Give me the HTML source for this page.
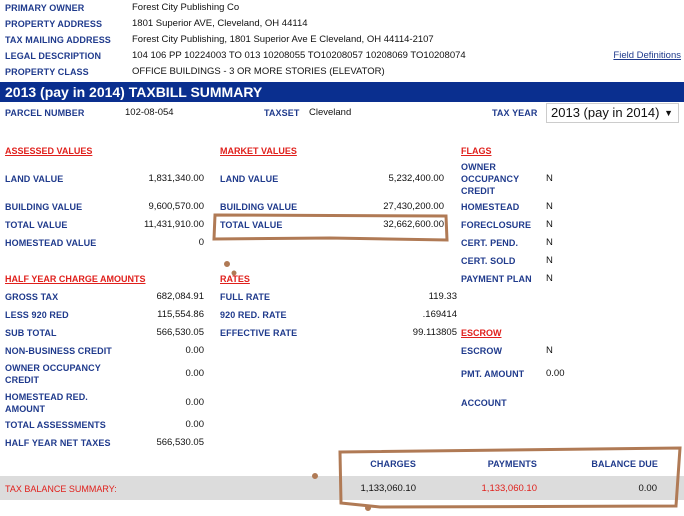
<!DOCTYPE html>
<html><head><style>
body{margin:0;width:684px;height:516px;position:relative;background:#fff;font-family:"Liberation Sans",Arial,sans-serif;overflow:hidden}
div{position:absolute;white-space:nowrap;line-height:12px}
.l{font-size:9px;font-weight:bold;color:#1f3a8c;letter-spacing:0.1px}
.t{font-size:9.5px;color:#111}
.v{font-size:9.5px;color:#111;text-align:right;width:150px}
.h{font-size:9px;font-weight:bold;color:#e0201c;text-decoration:underline}
</style></head><body>
<div class="l" style="left:5px;top:2px">PRIMARY OWNER</div>
<div class="t" style="left:132px;top:2px">Forest City Publishing Co</div>
<div class="l" style="left:5px;top:18px">PROPERTY ADDRESS</div>
<div class="t" style="left:132px;top:18px">1801 Superior AVE, Cleveland, OH 44114</div>
<div class="l" style="left:5px;top:34px">TAX MAILING ADDRESS</div>
<div class="t" style="left:132px;top:34px">Forest City Publishing, 1801 Superior Ave E Cleveland, OH 44114-2107</div>
<div class="l" style="left:5px;top:50px">LEGAL DESCRIPTION</div>
<div class="t" style="left:132px;top:50px">104 106 PP 10224003 TO 013 10208055 TO10208057 10208069 TO10208074</div>
<div class="t" style="right:3px;top:50px;color:#1f3a8c;text-decoration:underline">Field Definitions</div>
<div class="l" style="left:5px;top:66px">PROPERTY CLASS</div>
<div class="t" style="left:132px;top:66px">OFFICE BUILDINGS - 3 OR MORE STORIES (ELEVATOR)</div>
<div style="left:0;top:82px;width:684px;height:20px;background:#0a2f8f"></div>
<div style="left:5px;top:83px;line-height:18px;color:#fff;font-weight:bold;font-size:14px">2013 (pay in 2014) TAXBILL SUMMARY</div>
<div class="l" style="left:5px;top:107px">PARCEL NUMBER</div>
<div class="t" style="left:125px;top:107px">102-08-054</div>
<div class="l" style="left:264px;top:107px">TAXSET</div>
<div class="t" style="left:309px;top:107px">Cleveland</div>
<div class="l" style="left:492px;top:107px">TAX YEAR</div>
<div style="left:546px;top:103px;width:133px;height:20px;border:1px solid #ccc;box-sizing:border-box;font-size:13px;line-height:18px;padding-left:4px;color:#111">2013 (pay in 2014)<span style="position:absolute;right:5px;font-size:9px">▼</span></div>

<div class="h" style="left:5px;top:145px">ASSESSED VALUES</div>
<div class="h" style="left:220px;top:145px">MARKET VALUES</div>
<div class="h" style="left:461px;top:145px">FLAGS</div>

<div class="l" style="left:5px;top:173px">LAND VALUE</div><div class="v" style="left:54px;top:173px">1,831,340.00</div>
<div class="l" style="left:5px;top:201px">BUILDING VALUE</div><div class="v" style="left:54px;top:201px">9,600,570.00</div>
<div class="l" style="left:5px;top:219px">TOTAL VALUE</div><div class="v" style="left:54px;top:219px">11,431,910.00</div>
<div class="l" style="left:5px;top:237px">HOMESTEAD VALUE</div><div class="v" style="left:54px;top:237px">0</div>

<div class="l" style="left:220px;top:173px">LAND VALUE</div><div class="v" style="left:294px;top:173px">5,232,400.00</div>
<div class="l" style="left:220px;top:201px">BUILDING VALUE</div><div class="v" style="left:294px;top:201px">27,430,200.00</div>
<div class="l" style="left:220px;top:219px">TOTAL VALUE</div><div class="v" style="left:294px;top:219px">32,662,600.00</div>

<div class="l" style="left:461px;top:161px">OWNER</div>
<div class="l" style="left:461px;top:173px">OCCUPANCY</div>
<div class="l" style="left:461px;top:185px">CREDIT</div>
<div class="t" style="left:546px;top:173px">N</div>
<div class="l" style="left:461px;top:201px">HOMESTEAD</div><div class="t" style="left:546px;top:201px">N</div>
<div class="l" style="left:461px;top:219px">FORECLOSURE</div><div class="t" style="left:546px;top:219px">N</div>
<div class="l" style="left:461px;top:237px">CERT. PEND.</div><div class="t" style="left:546px;top:237px">N</div>
<div class="l" style="left:461px;top:255px">CERT. SOLD</div><div class="t" style="left:546px;top:255px">N</div>
<div class="l" style="left:461px;top:273px">PAYMENT PLAN</div><div class="t" style="left:546px;top:273px">N</div>

<div class="h" style="left:5px;top:273px">HALF YEAR CHARGE AMOUNTS</div>
<div class="h" style="left:220px;top:273px">RATES</div>

<div class="l" style="left:5px;top:291px">GROSS TAX</div><div class="v" style="left:54px;top:291px">682,084.91</div>
<div class="l" style="left:5px;top:309px">LESS 920 RED</div><div class="v" style="left:54px;top:309px">115,554.86</div>
<div class="l" style="left:5px;top:327px">SUB TOTAL</div><div class="v" style="left:54px;top:327px">566,530.05</div>
<div class="l" style="left:5px;top:345px">NON-BUSINESS CREDIT</div><div class="v" style="left:54px;top:345px">0.00</div>
<div class="l" style="left:5px;top:362px">OWNER OCCUPANCY</div>
<div class="l" style="left:5px;top:374px">CREDIT</div><div class="v" style="left:54px;top:368px">0.00</div>
<div class="l" style="left:5px;top:391px">HOMESTEAD RED.</div>
<div class="l" style="left:5px;top:403px">AMOUNT</div><div class="v" style="left:54px;top:397px">0.00</div>
<div class="l" style="left:5px;top:419px">TOTAL ASSESSMENTS</div><div class="v" style="left:54px;top:419px">0.00</div>
<div class="l" style="left:5px;top:437px">HALF YEAR NET TAXES</div><div class="v" style="left:54px;top:437px">566,530.05</div>

<div class="l" style="left:220px;top:291px">FULL RATE</div><div class="v" style="left:307px;top:291px">119.33</div>
<div class="l" style="left:220px;top:309px">920 RED. RATE</div><div class="v" style="left:307px;top:309px">.169414</div>
<div class="l" style="left:220px;top:327px">EFFECTIVE RATE</div><div class="v" style="left:307px;top:327px">99.113805</div>

<div class="h" style="left:461px;top:327px">ESCROW</div>
<div class="l" style="left:461px;top:345px">ESCROW</div><div class="t" style="left:546px;top:345px">N</div>
<div class="l" style="left:461px;top:368px">PMT. AMOUNT</div><div class="t" style="left:546px;top:368px">0.00</div>
<div class="l" style="left:461px;top:397px">ACCOUNT</div>

<div style="left:0;top:476px;width:684px;height:24px;background:#dcdcdc"></div>
<div class="l" style="left:266px;top:458px;width:150px;text-align:right">CHARGES</div>
<div class="l" style="left:387px;top:458px;width:150px;text-align:right">PAYMENTS</div>
<div class="l" style="left:508px;top:458px;width:150px;text-align:right">BALANCE DUE</div>
<div style="left:5px;top:483px;font-size:9px;color:#e0201c">TAX BALANCE SUMMARY:</div>
<div class="v" style="left:266px;top:483px">1,133,060.10</div>
<div class="v" style="left:387px;top:483px;color:#e0201c">1,133,060.10</div>
<div class="v" style="left:507px;top:483px">0.00</div>

<svg style="position:absolute;left:0;top:0" width="684" height="516" fill="none" stroke="#b07a55" stroke-width="3" stroke-linecap="round">
<path d="M215 215 L446 216 L447 240 L330 238 L214 239 Z"/>
<path d="M340 452 L680 448 L676 506 L380 507 L341 503 Z"/>
<circle cx="227" cy="264" r="1.5" fill="#b07a55"/>
<circle cx="234" cy="273" r="1" fill="#b07a55"/>
<circle cx="315" cy="476" r="1.5" fill="#b07a55"/>
<circle cx="368" cy="508" r="1.5" fill="#b07a55"/>
</svg>
</body></html>
